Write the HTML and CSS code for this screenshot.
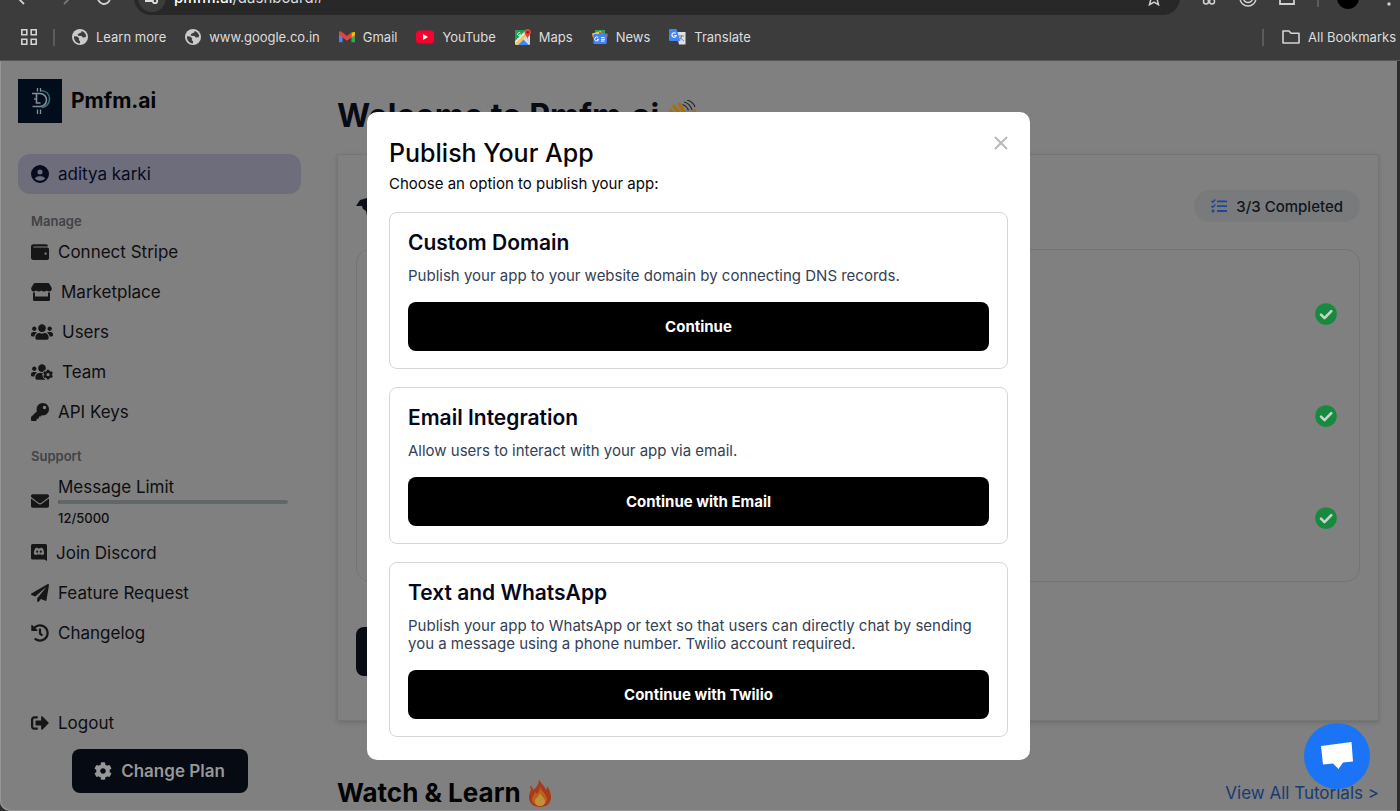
FILE: index.html
```html
<!DOCTYPE html>
<html lang="en">
<head>
<meta charset="utf-8">
<title>Pmfm.ai – Dashboard</title>
<link rel="stylesheet" href="styles.css">
</head>
<body>
<svg class="defs" aria-hidden="true">
  <symbol id="globe" viewBox="0 0 16 16"><circle cx="8" cy="8" r="8" fill="#c9cacc"/><path d="M2 7.200l3.200.3 2 2-.5 1.500 1.300 1.200v2.300C4.300 14.300 1.600 11 2 7.200zM7.400 4.200l-1.700 1 .4 1.500 3.400.2 1.300 1.500 2.700-.2.700-1.500C13.600 4 11.400 2.200 9.300 1.900L9.600 3.300z" fill="#3c3c3c"/></symbol>
  <symbol id="cog" viewBox="0 0 512 512"><path d="M487.400 315.700l-42.600-24.600c4.300-23.200 4.300-47 0-70.200l42.600-24.600c4.900-2.800 7.100-8.600 5.500-14-11.100-35.600-30-67.800-54.700-94.600-3.800-4.100-10-5.100-14.800-2.300L380.800 110c-17.900-15.400-38.500-27.300-60.800-35.100V25.800c0-5.600-3.900-10.500-9.400-11.700-36.700-8.200-74.300-7.800-109.200 0-5.500 1.200-9.400 6.100-9.400 11.700V75c-22.200 7.900-42.800 19.800-60.800 35.100L88.700 85.500c-4.900-2.800-11-1.900-14.800 2.300-24.700 26.700-43.600 58.900-54.700 94.600-1.700 5.400.6 11.200 5.500 14L67.300 221c-4.300 23.200-4.300 47 0 70.200l-42.600 24.600c-4.900 2.800-7.100 8.600-5.500 14 11.100 35.600 30 67.800 54.700 94.600 3.800 4.100 10 5.100 14.800 2.300l42.600-24.600c17.900 15.400 38.500 27.300 60.800 35.100v49.200c0 5.600 3.900 10.500 9.400 11.700 36.700 8.200 74.300 7.800 109.200 0 5.500-1.200 9.400-6.100 9.400-11.700v-49.200c22.200-7.900 42.800-19.800 60.800-35.100l42.600 24.600c4.900 2.800 11 1.900 14.800-2.300 24.700-26.700 43.600-58.900 54.700-94.600 1.500-5.500-.7-11.300-5.600-14.100zM256 336c-44.100 0-80-35.900-80-80s35.900-80 80-80 80 35.900 80 80-35.900 80-80 80z"/></symbol>
  <symbol id="check" viewBox="0 0 22 22"><circle cx="11" cy="11" r="10.800" fill="#188a3f"/><path d="M6 11.600l3.500 3.500 6.800-7" fill="none" stroke="#c9d3cb" stroke-width="2.600" stroke-linecap="round" stroke-linejoin="round"/></symbol>
</svg>

<header class="browser">
  <div class="toolbar">
    <button class="tool" aria-label="Back"><svg width="16" height="16" viewBox="0 0 16 16"><path d="M15 8H2M8 2L2 8l6 6" fill="none" stroke="#d0d0d0" stroke-width="1.800"/></svg></button>
    <button class="tool" aria-label="Forward"><svg width="16" height="16" viewBox="0 0 16 16"><path d="M1 8h13M8 2l6 6-6 6" fill="none" stroke="#777" stroke-width="1.800"/></svg></button>
    <button class="tool" aria-label="Reload"><svg width="16" height="16" viewBox="0 0 16 16"><path d="M14 8a6 6 0 1 1-2-4.500L14 5V1" fill="none" stroke="#d0d0d0" stroke-width="1.800"/></svg></button>
    <div class="address">
      <span class="site"><svg width="14" height="14" viewBox="0 0 14 14" fill="none" stroke="#ddd" stroke-width="1.800"><path d="M6 4h8M0 10h7"/><circle cx="3" cy="4" r="2"/><circle cx="10" cy="10" r="2.200"/></svg></span>
      <span class="url"><b>pmfm.ai</b>/dashboard#</span>
      <svg width="16" height="16" viewBox="0 0 16 16"><path d="M8 1l2 4.800 5.200.4-4 3.400 1.300 5.100L8 12l-4.500 2.700 1.300-5.100-4-3.400L6 5.800z" fill="none" stroke="#d0d0d0" stroke-width="1.500"/></svg>
    </div>
    <div class="extensions">
      <svg width="16" height="14" viewBox="0 0 16 14" fill="none" stroke="#d0d0d0" stroke-width="1.500"><circle cx="5" cy="10.500" r="2.500"/><circle cx="11" cy="10.500" r="2.500"/><path d="M4 8l7-8M12 8L5 0"/></svg>
      <svg width="18" height="18" viewBox="0 0 18 18" fill="none" stroke="#d0d0d0" stroke-width="1.500"><circle cx="9" cy="9" r="8"/><circle cx="9" cy="9" r="4.500"/></svg>
      <svg width="16" height="16" viewBox="0 0 16 16"><path d="M1 2h14v12H1z" fill="none" stroke="#d0d0d0" stroke-width="1.800"/></svg>
      <span class="divider"></span>
      <span class="avatar"></span>
      <svg width="4" height="16" viewBox="0 0 4 16" fill="#d0d0d0"><circle cx="2" cy="2" r="1.700"/><circle cx="2" cy="8" r="1.700"/><circle cx="2" cy="14" r="1.700"/></svg>
    </div>
  </div>
  <nav class="bookmarks" aria-label="Bookmarks">
    <button class="apps" aria-label="Apps"><svg width="16" height="16" viewBox="0 0 16 16" fill="none" stroke="#d4d4d4" stroke-width="1.600"><path d="M.8.8h5v5h-5zM10.200.8h5v5h-5zM.8 10.200h5v5h-5zM10.200 10.200h5v5h-5z"/></svg></button>
    <span class="divider"></span>
    <div class="links">
      <a href="#"><svg width="16" height="16"><use href="#globe"/></svg>Learn more</a>
      <a href="#"><svg width="16" height="16"><use href="#globe"/></svg>www.google.co.in</a>
      <a href="#"><svg width="16" height="16" viewBox="0 0 16 16"><path d="M0 4v9.300h3.600V7z" fill="#4285f4"/><path d="M16 4v9.300h-3.600V7z" fill="#34a853"/><path d="M12.400 3.500L16 3v3l-3.600 2.700z" fill="#fbbc04"/><path d="M0 3.400C0 2 1.500 2 2.500 2.700L8 6.900l4.400-3.500v5L8 11.700 0 5.700z" fill="#ea4335"/></svg>Gmail</a>
      <a href="#"><svg width="18" height="16" viewBox="0 0 18 16"><rect y="1.500" width="18" height="13" rx="3.500" fill="#f8012f"/><path d="M7 5l5 3-5 3z" fill="#fff"/></svg>YouTube</a>
      <a href="#"><svg width="16" height="16" viewBox="0 0 16 16"><rect y="1" width="15" height="15" rx="1.500" fill="#e4e6e8"/><path d="M0 2.500C0 1.500.5 1 1.500 1H11L0 12z" fill="#1f9d55"/><path d="M0 14.500L10 5l2 2-9 9H1.500z" fill="#f6c844"/><path d="M3 16l5.500-5.500L14 16z" fill="#4285f4"/><path d="M8.500 9.500L11 7l4 4v4z" fill="#d5d8da"/><path d="M12.500 10C12 7 9.500 6 9.500 3.200a3.200 3.200 0 0 1 6.500 0C16 6 13 7 12.500 10z" fill="#e04337"/><circle cx="12.700" cy="3.300" r="1.200" fill="#8c1c14"/><path d="M5.500 4.200a1.600 1.600 0 1 0 .2 1.500H4.200" fill="none" stroke="#fff" stroke-width=".8"/></svg>Maps</a>
      <a href="#"><svg width="16" height="16" viewBox="0 0 16 16"><path d="M3 1h10v5H3z" fill="#2da455"/><path d="M0 4.500L9 2l1 5-9 2z" fill="#f7c63d"/><path d="M7 3l9 2-1.500 6L7 8z" fill="#e34c3f"/><rect x="1.300" y="5" width="13.400" height="10" rx="1.300" fill="#4385f5"/><path d="M6.300 8.700a2 2 0 1 0 .4 1.700H5M9 8.500h3.500M9 10.300h4M9 12h3.500" fill="none" stroke="#fff"/></svg>News</a>
      <a href="#"><svg width="17" height="16" viewBox="0 0 17 16"><path d="M7 3h9.500v12.500H10z" fill="#dfe1e5"/><path d="M10 7h5M12.500 6v1c0 2-1 3.500-2.500 4.500M11 8.500l4 3.500" fill="none" stroke="#777" stroke-width=".9"/><path d="M1 0h6.500L11.500 12H1a1 1 0 0 1-1-1V1a1 1 0 0 1 1-1z" fill="#4385f5"/><path d="M6.800 4.500a2.200 2.200 0 1 0 .5 2H5.200" fill="none" stroke="#fff" stroke-width="1.100"/></svg>Translate</a>
    </div>
    <span class="divider"></span>
    <a class="all" href="#"><svg width="18" height="14" viewBox="0 0 18 14"><path d="M1 1h6l2 2.200h8V13H1z" fill="none" stroke="#d4d4d4" stroke-width="1.600" stroke-linejoin="round"/></svg>All Bookmarks</a>
  </nav>
</header>

<div class="workspace">
  <div class="page">
    <aside class="sidebar">
      <a class="brand" href="#">
        <svg width="44" height="44" viewBox="0 0 44 44"><rect width="44" height="44" fill="#020d1c"/><g fill="none" stroke-width="1.600"><path d="M14 14.500h8a6.500 6.500 0 0 1 0 13h-3.500" stroke="#868e95"/><path d="M18.500 14.500v9.500h4" stroke="#868e95"/><path d="M14.500 27.500h5M16 20h2" stroke="#79838b"/><path d="M22 11.500c6 0 9.500 3.500 9.500 8.500s-4 8.500-8 8.500" stroke="#347078"/><path d="M19.500 9v3.500M22.500 9v3.500M19.500 30.500V35M22.500 30.500V35" stroke="#7d949b" stroke-width="1.300"/></g></svg>
        <span>Pmfm.ai</span>
      </a>
      <a class="user" href="#"><svg width="18" height="18" viewBox="0 0 512 512"><path fill-rule="evenodd" d="M399 384.200C376.900 345.800 335.400 320 288 320l-64 0c-47.400 0-88.900 25.800-111 64.200c35.200 39.200 86.200 63.800 143 63.800s107.800-24.700 143-63.800zM0 256a256 256 0 1 1 512 0A256 256 0 1 1 0 256zm256 16a72 72 0 1 0 0-144 72 72 0 1 0 0 144z"/></svg>aditya karki</a>
      <h2 class="group-title">Manage</h2>
      <nav class="menu">
        <a href="#"><svg width="18" height="18" viewBox="0 0 512 512"><path d="M461.200 128H80c-8.840 0-16-7.160-16-16s7.160-16 16-16h384c8.840 0 16-7.160 16-16 0-26.510-21.490-48-48-48H64C28.650 32 0 60.650 0 96v320c0 35.350 28.650 64 64 64h397.200c28.020 0 50.800-21.530 50.800-48V176c0-26.470-22.780-48-50.800-48zM416 336c-17.670 0-32-14.330-32-32s14.330-32 32-32 32 14.330 32 32-14.330 32-32 32z"/></svg>Connect Stripe</a>
        <a href="#"><svg width="21" height="18" viewBox="0 0 21 18"><path d="M4 0h13a1.500 1.500 0 0 1 1.200.6l2.200 3.600c1 1.700.2 4-1.800 4.200-1.100.1-2.100-.3-2.800-1-.7.700-1.600 1.100-2.600 1.100-1.100 0-2.100-.4-2.700-1.100-.7.700-1.700 1.100-2.700 1.100-1.100 0-2-.4-2.700-1.100-.7.700-1.600 1.100-2.700 1.100C.4 8.500-.3 6 .6 4.200L2.800.6A1.500 1.500 0 0 1 4 0z"/><path d="M2 9.600h2v3.900h13V9.600h2v6.900a1.500 1.500 0 0 1-1.500 1.500h-14A1.500 1.500 0 0 1 2 16.500z"/></svg>Marketplace</a>
        <a href="#"><svg width="22" height="18" viewBox="0 0 640 512"><path d="M96 224c35.300 0 64-28.700 64-64s-28.700-64-64-64-64 28.700-64 64 28.700 64 64 64zm448 0c35.300 0 64-28.700 64-64s-28.700-64-64-64-64 28.700-64 64 28.700 64 64 64zm32 32h-64c-17.600 0-33.500 7.100-45.100 18.600 40.300 22.100 68.900 62 75.100 109.400h66c17.700 0 32-14.300 32-32v-32c0-35.300-28.700-64-64-64zm-256 0c61.900 0 112-50.100 112-112S381.900 32 320 32 208 82.100 208 144s50.100 112 112 112zm76.800 32h-8.300c-20.800 10-43.900 16-68.500 16s-47.600-6-68.500-16h-8.300C179.600 288 128 339.600 128 403.200V432c0 26.500 21.500 48 48 48h288c26.500 0 48-21.500 48-48v-28.800c0-63.600-51.600-115.200-115.200-115.200zm-223.700-13.400C161.500 263.100 145.600 256 128 256H64c-35.300 0-64 28.700-64 64v32c0 17.700 14.300 32 32 32h65.900c6.300-47.400 34.900-87.300 75.200-109.400z"/></svg>Users</a>
        <a href="#"><svg width="22" height="18" viewBox="0 0 640 512"><path d="M96 224c35.300 0 64-28.700 64-64s-28.700-64-64-64-64 28.700-64 64 28.700 64 64 64zM320 256c61.900 0 112-50.100 112-112S381.900 32 320 32 208 82.100 208 144s50.100 112 112 112zM243.200 288C179.600 288 128 339.600 128 403.200V432c0 26.500 21.500 48 48 48h240l-20-192zM173.100 274.600C161.500 263.100 145.600 256 128 256H64c-35.300 0-64 28.700-64 64v32c0 17.700 14.300 32 32 32h65.900c6.300-47.400 34.900-87.300 75.200-109.400z"/><circle cx="496" cy="332" r="165" fill="#808080"/><use href="#cog" x="346" y="182" width="300" height="300"/></svg>Team</a>
        <a href="#"><svg width="18" height="18" viewBox="0 0 512 512"><path d="M512 176.001C512 273.203 433.202 352 336 352c-11.220 0-22.190-1.062-32.827-3.069l-24.012 27.014A23.999 23.999 0 0 1 261.223 384H224v40c0 13.255-10.745 24-24 24h-40v40c0 13.255-10.745 24-24 24H24c-13.255 0-24-10.745-24-24v-78.059c0-6.365 2.529-12.470 7.029-16.971l161.802-161.802C163.108 213.814 160 195.271 160 176 160 78.798 238.797.001 335.999 0 433.488-.001 512 78.511 512 176.001zM336 128c0 26.510 21.490 48 48 48s48-21.490 48-48-21.490-48-48-48-48 21.490-48 48z"/></svg>API Keys</a>
      </nav>
      <h2 class="group-title support">Support</h2>
      <div class="limit">
        <svg width="18" height="18" viewBox="0 0 512 512"><path d="M502.300 190.800c3.900-3.100 9.700-.2 9.700 4.700V400c0 26.500-21.500 48-48 48H48c-26.500 0-48-21.500-48-48V195.600c0-5 5.700-7.800 9.700-4.700 22.400 17.400 52.100 39.500 154.100 113.600 21.100 15.400 56.700 47.800 92.200 47.600 35.700.3 72-32.800 92.300-47.600 102-74.100 131.600-96.300 154-113.700zM256 320c23.200.4 56.600-29.200 73.400-41.400 132.700-96.300 142.800-104.700 173.400-128.700 5.800-4.500 9.200-11.500 9.200-18.900v-19c0-26.500-21.500-48-48-48H48c-26.500 0-48 21.500-48 48v19c0 7.400 3.400 14.300 9.200 18.900 30.600 23.900 40.700 32.400 173.400 128.700 16.800 12.200 50.200 41.800 73.400 41.400z"/></svg>
        <div class="limit-body">
          <span class="limit-name">Message Limit</span>
          <div class="meter"></div>
          <span class="limit-count">12/5000</span>
        </div>
      </div>
      <nav class="menu">
        <a href="#"><svg width="16" height="18" viewBox="0 0 16 18"><path fill-rule="evenodd" d="M1.500 0h13A1.500 1.500 0 0 1 16 1.500V17l-2.500-1.500h-12A1.500 1.500 0 0 1 0 14V1.500A1.500 1.500 0 0 1 1.500 0zm2.800 4.200C3.200 6 2.800 8 2.900 10c.7.600 1.500 1 2.400 1.200l.6-1c1.300.4 2.900.4 4.200 0l.6 1c.9-.2 1.700-.6 2.400-1.200.1-2-.3-4-1.400-5.800-.6-.3-1.300-.5-2-.6l-.4.800a8 8 0 0 0-2.600 0l-.4-.8c-.7.100-1.400.3-2 .6z"/><circle cx="6.200" cy="7.700" r="1.100"/><circle cx="9.800" cy="7.700" r="1.100"/></svg>Join Discord</a>
        <a href="#"><svg width="18" height="18" viewBox="0 0 512 512"><path d="M476 3.200L12.500 270.600c-18.100 10.400-15.800 35.600 2.200 43.200L121 358.400l287.300-253.200c5.500-4.900 13.300 2.600 8.600 8.300L176 407v80.500c0 23.600 28.500 32.900 42.500 15.800L282 426l124.600 52.200c14.200 6 30.400-2.900 33-18.200l72-432C515 7.800 493.300-6.800 476 3.200z"/></svg>Feature Request</a>
        <a href="#"><svg width="18" height="18" viewBox="0 0 512 512"><path d="M504 255.531c.253 136.640-111.180 248.372-247.820 248.468-59.015.042-113.223-20.530-155.822-54.911-11.077-8.940-11.905-25.541-1.839-35.607l11.267-11.267c8.609-8.609 22.353-9.551 31.891-1.984C173.062 425.135 212.781 440 256 440c101.705 0 184-82.311 184-184 0-101.705-82.311-184-184-184-48.814 0-93.149 18.969-126.068 49.932l50.754 50.754c10.080 10.080 2.941 27.314-11.313 27.314H24c-8.837 0-16-7.163-16-16V38.627c0-14.254 17.234-21.393 27.314-11.314l49.372 49.372C129.209 34.136 189.552 8 256 8c136.810 0 247.747 110.780 248 247.531zm-180.912 78.784l9.823-12.630c8.138-10.463 6.253-25.542-4.210-33.679L288 256.349V152c0-13.255-10.745-24-24-24h-16c-13.255 0-24 10.745-24 24v135.651l65.409 50.874c10.463 8.137 25.541 6.253 33.679-4.210z"/></svg>Changelog</a>
      </nav>
      <nav class="menu logout">
        <a href="#"><svg width="18" height="18" viewBox="0 0 512 512"><path d="M497 273L329 441c-15 15-41 4.500-41-17v-96H152c-13.300 0-24-10.700-24-24v-96c0-13.300 10.700-24 24-24h136V88c0-21.400 25.900-32 41-17l168 168c9.300 9.400 9.300 24.600 0 34zM192 436v-40c0-6.600-5.400-12-12-12H96c-17.700 0-32-14.300-32-32V160c0-17.700 14.300-32 32-32h84c6.600 0 12-5.400 12-12V76c0-6.600-5.400-12-12-12H96c-53 0-96 43-96 96v192c0 53 43 96 96 96h84c6.600 0 12-5.400 12-12z"/></svg>Logout</a>
      </nav>
      <button class="plan"><svg width="18" height="18"><use href="#cog"/></svg>Change Plan</button>
    </aside>

    <main class="main">
      <h1 class="welcome">Welcome to Pmfm.ai
        <svg width="32" height="32" viewBox="0 0 32 32"><g fill="none" stroke="#a2700e" stroke-width="3.600" stroke-linecap="round"><path d="M14 20L3.500 11M16 18L7 6.500M19 16L12.500 4.500M13 22L3 16.500M24 22l3.500-11"/></g><path d="M8 19l11-8 7 8c2 6-2 10-7 10-4 0-8-4-11-10z" fill="#a2700e"/><path d="M17 2c4 1 7 4 8 8M20 0c4 1 7 4 8 7M15.500 4.500c3 1 5 3 6 6" fill="none" stroke="#26292c" stroke-width="1.200"/></svg>
      </h1>
      <section class="setup">
        <div class="setup-head">
          <svg width="36" height="20" viewBox="0 0 36 20"><path d="M0 10l4-6 7-2 3-2h14v20H11l-1-5-3-2-1-3z" fill="#0d1018"/></svg>
          <span class="badge"><svg width="16" height="14" viewBox="0 0 16 14"><g fill="none" stroke="#1d4694" stroke-width="1.800"><path d="M6 2.300h10M6 7.200h10M6 12h10"/><path d="M.4 2l1.300 1.300L4.300.6M.4 7l1.300 1.300 2.600-2.700" stroke-width="1.400"/></g><circle cx="2" cy="12" r="1.500" fill="#1d4694"/></svg>3/3 Completed</span>
        </div>
        <ul class="steps">
          <li><svg width="22" height="22"><use href="#check"/></svg></li>
          <li><svg width="22" height="22"><use href="#check"/></svg></li>
          <li><svg width="22" height="22"><use href="#check"/></svg></li>
        </ul>
        <button class="setup-action" aria-label="Open app"></button>
      </section>
      <div class="learn">
        <h2>Watch &amp; Learn
          <svg width="22" height="28" viewBox="0 0 22 28"><path d="M10 0c1 4 6 7 7 11 1-1 1-2 1-4 3 4 4 8 4 11 0 6-4 10-11 10S0 24 0 18c0-3 1-5 2-7l-1-4c2 0 3 2 3 4C8 8 10 5 10 0z" fill="#a8391d"/><path d="M11 6c0 5 6 8 7 14 0 4-3 7-7 7s-8-3-8-7c0-3 2-4 3-7l2 2c2-2 3-5 3-9z" fill="#b9601c"/><path d="M11 14c1 3 5 5 5 8s-2 5-5 5-5-2-5-5 4-4 5-8z" fill="#c09238"/></svg>
        </h2>
        <a href="#">View All Tutorials &gt;</a>
      </div>
    </main>
  </div>

  <div class="overlay">
    <div class="modal" role="dialog" aria-modal="true" aria-labelledby="dialog-title">
      <button class="close" aria-label="Close"><svg width="14" height="14" viewBox="0 0 14 14"><path d="M1 1l12 12M13 1L1 13" stroke="#b9b9b9" stroke-width="2"/></svg></button>
      <h2 class="modal-title" id="dialog-title">Publish Your App</h2>
      <p class="modal-lead">Choose an option to publish your app:</p>
      <div class="options">
        <section class="option">
          <h3>Custom Domain</h3>
          <p>Publish your app to your website domain by connecting DNS records.</p>
          <button>Continue</button>
        </section>
        <section class="option">
          <h3>Email Integration</h3>
          <p>Allow users to interact with your app via email.</p>
          <button>Continue with Email</button>
        </section>
        <section class="option">
          <h3>Text and WhatsApp</h3>
          <p>Publish your app to WhatsApp or text so that users can directly chat by sending you a message using a phone number. Twilio account required.</p>
          <button>Continue with Twilio</button>
        </section>
      </div>
    </div>
  </div>
  <button class="chat" aria-label="Open chat"><svg width="34" height="30" viewBox="0 0 34 30"><path d="M1 5L31.500 1l1.500 19.500-10 1-4.500 6.500-5.500-5.500-10 1z" fill="#fff"/></svg></button>
</div>
</body>
</html>
```
FILE: styles.css
```css
* { box-sizing: border-box; }

body {
  margin: 0;
  height: 100vh;
  display: flex;
  flex-direction: column;
  overflow: hidden;
  background: #2c2c2c;
  font-family: Inter, "Liberation Sans", sans-serif;
  color: #0e0e10;
}

h1, h2, h3, p, ul { margin: 0; padding: 0; }
a { color: inherit; text-decoration: none; }
button { font: inherit; border: 0; padding: 0; background: none; cursor: pointer; }
svg { flex: none; display: block; }
.defs { position: absolute; width: 0; height: 0; }

/* Browser chrome */
.browser {
  flex: none;
  background: #3c3c3c;
  border-bottom: 1px solid #565656;
  color: #dcdcdc;
}

.toolbar {
  height: 15px;
  display: flex;
  align-items: flex-end;
  overflow: hidden;
  padding-left: 16px;
}

.tool { height: 34px; margin-right: 22px; display: flex; align-items: center; }
.tool:nth-child(-n+2) { margin-right: 24px; }

.address {
  flex: 1;
  height: 34px;
  border-radius: 17px;
  background: #282828;
  display: flex;
  align-items: center;
  gap: 8px;
  padding: 0 18px 0 4px;
}

.site {
  width: 28px;
  height: 28px;
  border-radius: 50%;
  background: #3c3c3c;
  display: grid;
  place-items: center;
}

.url { flex: 1; font-size: 15px; line-height: 20px; }
.url b { font-weight: 500; color: #fff; }

.extensions {
  flex: none;
  height: 34px;
  display: flex;
  align-items: center;
  gap: 22px;
  padding: 0 9px 0 21px;
}

.avatar { width: 22px; height: 22px; border-radius: 50%; background: #000; }
.divider { width: 2px; height: 17px; background: #5c5c5c; }
.extensions .divider { margin-right: -4px; }
.extensions .avatar { margin-right: 6px; }

.bookmarks {
  height: 45px;
  display: flex;
  align-items: center;
  padding: 0 4px 1px 21px;
  font-size: 13px;
  line-height: 20px;
}

.apps { margin-right: 16px; }
.links { flex: 1; display: flex; gap: 19px; padding-left: 17px; }
.bookmarks a { display: flex; align-items: center; gap: 8px; white-space: nowrap; }
.bookmarks .all { margin-left: 18px; }

/* Page */
.workspace { flex: 1; min-height: 0; position: relative; }

.page {
  height: 100%;
  margin-right: 3px;
  display: flex;
  overflow: hidden;
  background: #808080;
  border-radius: 0 0 0 10px;
  box-shadow: inset 1px -1px 0 #979797;
}

.sidebar {
  flex: none;
  width: 319px;
  padding: 18px 18px 0;
  display: flex;
  flex-direction: column;
  font-size: 17px;
  line-height: 24px;
}

.sidebar svg { fill: #161616; }

.brand {
  display: flex;
  align-items: center;
  gap: 9px;
  font-size: 21px;
  line-height: 28px;
  font-weight: 700;
  color: #050506;
}

.user {
  height: 40px;
  margin-top: 31px;
  padding: 0 13px;
  border-radius: 12px;
  background: #6e6d7c;
  color: #060b20;
  display: flex;
  align-items: center;
  gap: 9px;
}

.sidebar .user svg { fill: #060b20; }

.group-title {
  margin: 17px 13px 1px;
  font-size: 13px;
  line-height: 20px;
  font-weight: 600;
  color: #404347;
}

.support { margin-top: 14px; }
.menu { padding: 0 13px; }
.menu a { height: 40px; display: flex; align-items: center; gap: 9px; }

.limit { margin: 8px 13px 6px; display: flex; align-items: center; gap: 9px; }
.limit-body { flex: 1; display: flex; flex-direction: column; }
.limit-name { line-height: 24px; }
.meter {
  height: 4px;
  margin: 1px 0 5px;
  border-radius: 2px;
  border-left: 1px solid #46555c;
  background: #62676a;
}
.limit-count { font-size: 13px; line-height: 18px; font-weight: 500; }

.logout { margin-top: 50px; }

.plan {
  align-self: center;
  width: 176px;
  height: 44px;
  margin-top: 6px;
  border-radius: 8px;
  background: #060a13;
  color: #979797;
  font-weight: 600;
  display: flex;
  align-items: center;
  justify-content: center;
  gap: 9px;
}

.sidebar .plan svg { fill: #979797; }

.main { flex: 1; min-width: 0; padding: 35px 18px 0; }

.welcome {
  display: flex;
  align-items: center;
  gap: 8px;
  font-size: 32px;
  line-height: 40px;
  font-weight: 700;
  color: #080b13;
}

.setup {
  margin-top: 18px;
  padding: 35px 18px 44px;
  border: 1px solid #747576;
  box-shadow: 0 2px 4px #6e6e6e;
}

.setup-head { display: flex; align-items: center; justify-content: space-between; }

.badge {
  height: 32px;
  padding: 0 17px;
  border-radius: 16px;
  background: #797a7b;
  color: #10151e;
  display: flex;
  align-items: center;
  gap: 9px;
  font-size: 15px;
  font-weight: 500;
}

.steps {
  margin: 27px 0 45px;
  padding: 13px 22px 12px;
  border: 1px solid #737475;
  border-radius: 14px;
  list-style: none;
}

.steps li { height: 102px; display: flex; align-items: center; justify-content: flex-end; }

.setup-action { display: block; width: 180px; height: 49px; border-radius: 8px; background: #080a14; }

.learn {
  margin-top: 56px;
  display: flex;
  align-items: center;
  justify-content: space-between;
}

.learn h2 {
  display: flex;
  align-items: center;
  gap: 8px;
  font-size: 26px;
  line-height: 32px;
  font-weight: 700;
  color: #030304;
}

.learn a { font-size: 17px; line-height: 24px; color: #183a73; }

/* Publish dialog */
.overlay {
  position: absolute;
  inset: 0 3px 0 0;
  display: flex;
  align-items: center;
  justify-content: center;
}

.modal {
  position: relative;
  width: 663px;
  max-width: 100%;
  padding: 24px 22px 23px;
  border-radius: 10px;
  background: #fff;
  color: #060608;
}

.close { position: absolute; top: 24px; right: 22px; }
.modal-title { font-size: 25px; line-height: 34px; font-weight: 500; }
.modal-lead { margin: 4px 0 18px; font-size: 15px; line-height: 20px; }
.options { display: flex; flex-direction: column; gap: 18px; }

.option {
  padding: 16px 18px 17px;
  border: 1px solid #d5d6d8;
  border-radius: 8px;
}

.option h3 { font-size: 21px; line-height: 28px; font-weight: 600; color: #05071a; }
.option p { margin: 10px 0 17px; font-size: 15px; line-height: 18px; color: #334155; }
.option button {
  width: 100%;
  height: 49px;
  border-radius: 8px;
  background: #000;
  color: #fff;
  font-size: 15px;
  font-weight: 700;
}

.chat {
  position: absolute;
  right: 30px;
  bottom: 22px;
  width: 66px;
  height: 66px;
  border-radius: 50%;
  background: #1b74f5;
  display: grid;
  place-items: center;
}
```
